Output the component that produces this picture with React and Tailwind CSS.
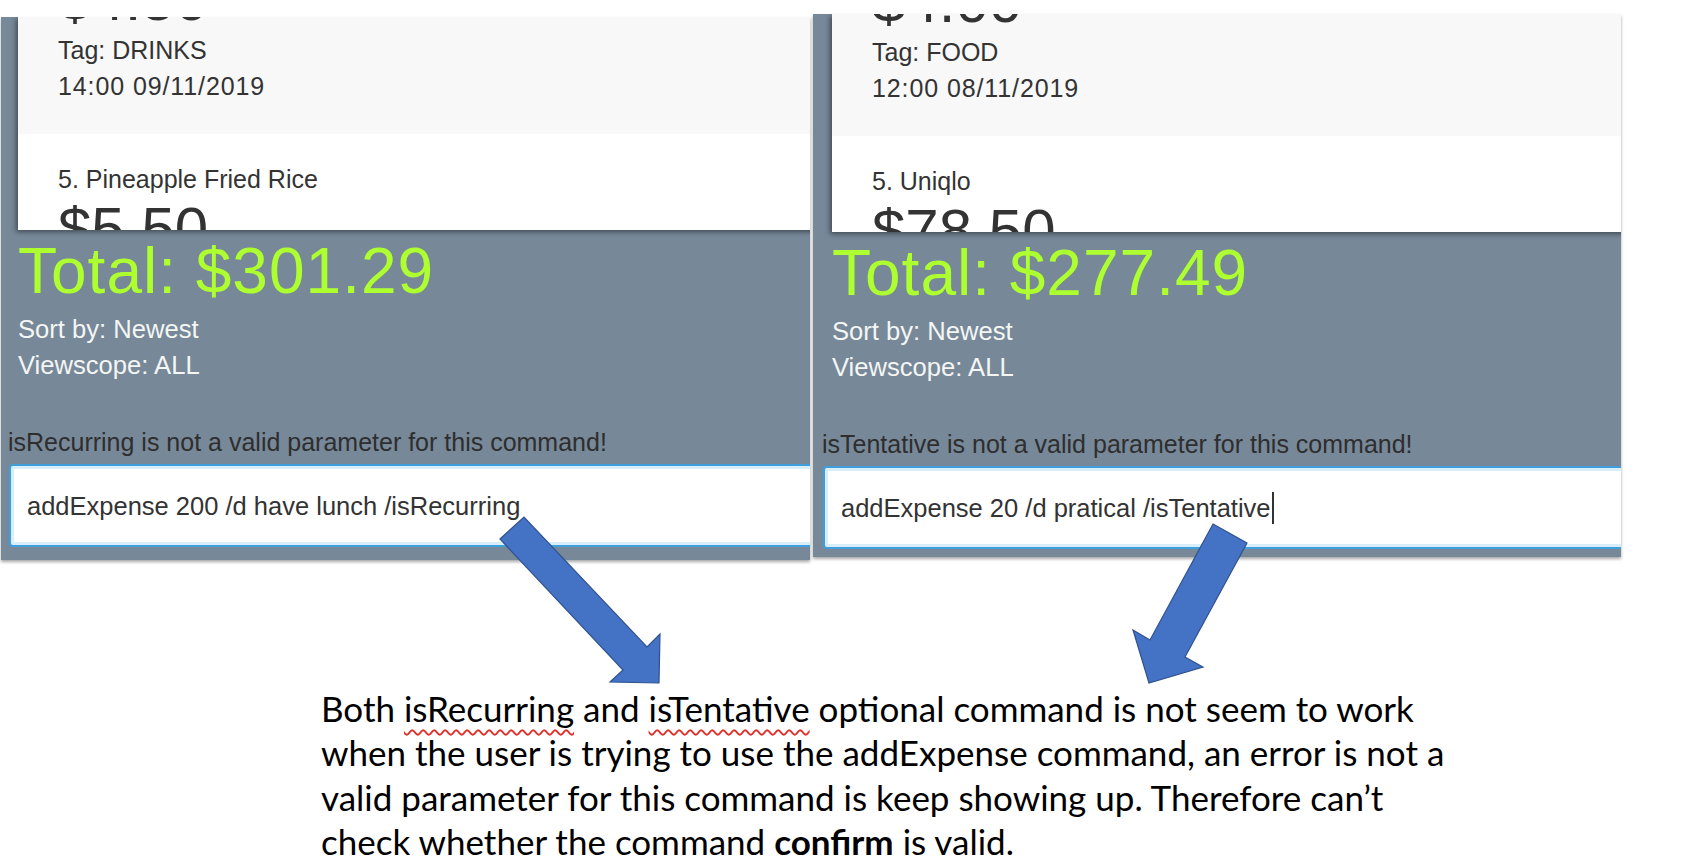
const panels = [
  {
    key: 'left',
    outer: 'mt-[17px] ml-[1px] w-[809px] h-[543px]',
    card: 'ml-[17px] h-[213px]',
    list: '-mt-[49px]',
    textPad: 'ml-[17px]',
    topPrice: '$4.50',
    tag: 'DRINKS',
    date: '14:00 09/11/2019',
    name: '5. Pineapple Fried Rice',
    price: '$5.50',
    total: 'Total: $301.29',
    error: 'isRecurring is not a valid parameter for this command!',
    errorPad: 'ml-[7px]',
    inputPad: 'ml-[8px]',
    command: 'addExpense 200 /d have lunch /isRecurring',
    cursor: false,
  },
  {
    key: 'right',
    outer: 'mt-[14px] ml-[3px] w-[808px] h-[543px]',
    card: 'ml-[19px] h-[218px]',
    list: '-mt-[44px]',
    textPad: 'ml-[19px]',
    topPrice: '$4.00',
    tag: 'FOOD',
    date: '12:00 08/11/2019',
    name: '5. Uniqlo',
    price: '$78.50',
    total: 'Total: $277.49',
    error: 'isTentative is not a valid parameter for this command!',
    errorPad: 'ml-[9px]',
    inputPad: 'ml-[10px]',
    command: 'addExpense 20 /d pratical /isTentative',
    cursor: true,
  },
];

function Panel({ p }) {
  return (
    <div className={`${p.outer} shrink-0 overflow-hidden bg-[#778899] shadow-[0_2px_3px_rgba(0,0,0,0.35)] font-['Liberation_Sans',Arial,sans-serif]`}>
      {/* expense list, scrolled so that item 4 is half gone */}
      <div className={`${p.card} -mr-6 overflow-hidden bg-white shadow-[-2px_2px_5px_rgba(0,0,0,0.45)]`}>
        <div className={p.list}>
          <div className="bg-[#f8f8f8] pl-[40px] pb-[30px] text-[25px] leading-[36px] text-[#333]">
            <div className="text-[60px] leading-[64px]">{p.topPrice}</div>
            <div>Tag: {p.tag}</div>
            <div className="tracking-[0.9px]">{p.date}</div>
          </div>
          <div className="bg-white pl-[40px] pt-[27px] text-[25px] leading-[36px] text-[#333]">
            <div>{p.name}</div>
            <div className="text-[60px] leading-[64px]">{p.price}</div>
          </div>
        </div>
      </div>

      <div className={`${p.textPad} mt-[9px] text-[64px] leading-[64px] tracking-[1px] text-[#adff2f]`}>{p.total}</div>
      <div className={`${p.textPad} mt-[8px] text-[25.6px] leading-[36px] text-[#f4f6f4]`}>
        <div>Sort by: Newest</div>
        <div>Viewscope: ALL</div>
      </div>

      <div className={`${p.errorPad} mt-[41px] text-[25px] leading-[36px] text-[#2e2e2e]`}>{p.error}</div>
      <div className={`${p.inputPad} -mr-4 mt-[4px] flex h-[83px] items-center rounded-l-[4px] border-2 border-[#3f9fdc] bg-white pl-[16px] shadow-[inset_0_0_0_3px_#d8eef9]`}>
        <span className="text-[25.5px] leading-[36px] text-[#333]">{p.command}</span>
        {p.cursor && <span className="ml-[1px] h-[32px] w-[2px] bg-[#333]" />}
      </div>
    </div>
  );
}

function Arrows() {
  return (
    <svg className="pointer-events-none absolute left-0 top-0" width="1682" height="868" viewBox="0 0 1682 868">
      <polygon
        points="500,539 524,517 647,647 660,634 659,683 610,682 623,670"
        fill="#4472c4"
        stroke="#2f528f"
        strokeWidth="1.2"
        strokeLinejoin="miter"
      />
      <polygon
        points="1213,524 1247,543 1185,657 1203,667 1149,683 1133,630 1150,640"
        fill="#4472c4"
        stroke="#2f528f"
        strokeWidth="1.2"
        strokeLinejoin="miter"
      />
    </svg>
  );
}

export default function App() {
  const wavy = 'underline decoration-wavy decoration-[#e0302c] decoration-[1.5px] underline-offset-[7px]';

  return (
    <div className="relative h-[868px] w-[1682px] overflow-hidden bg-white">
      <div className="flex items-start">
        {panels.map((p) => (
          <Panel key={p.key} p={p} />
        ))}
      </div>

      <p className="ml-[321px] mt-[126px] font-['Lato','Open_Sans',sans-serif] text-[35px] leading-[44.3px] text-black">
        Both <span className={wavy}>isRecurring</span> and <span className={wavy}>isTentative</span> optional command is not seem to work
        <br />
        when the user is trying to use the addExpense command, an error is not a
        <br />
        valid parameter for this command is keep showing up. Therefore can’t
        <br />
        check whether the command <b className="font-bold">confirm</b> is valid.
      </p>

      <Arrows />
    </div>
  );
}
